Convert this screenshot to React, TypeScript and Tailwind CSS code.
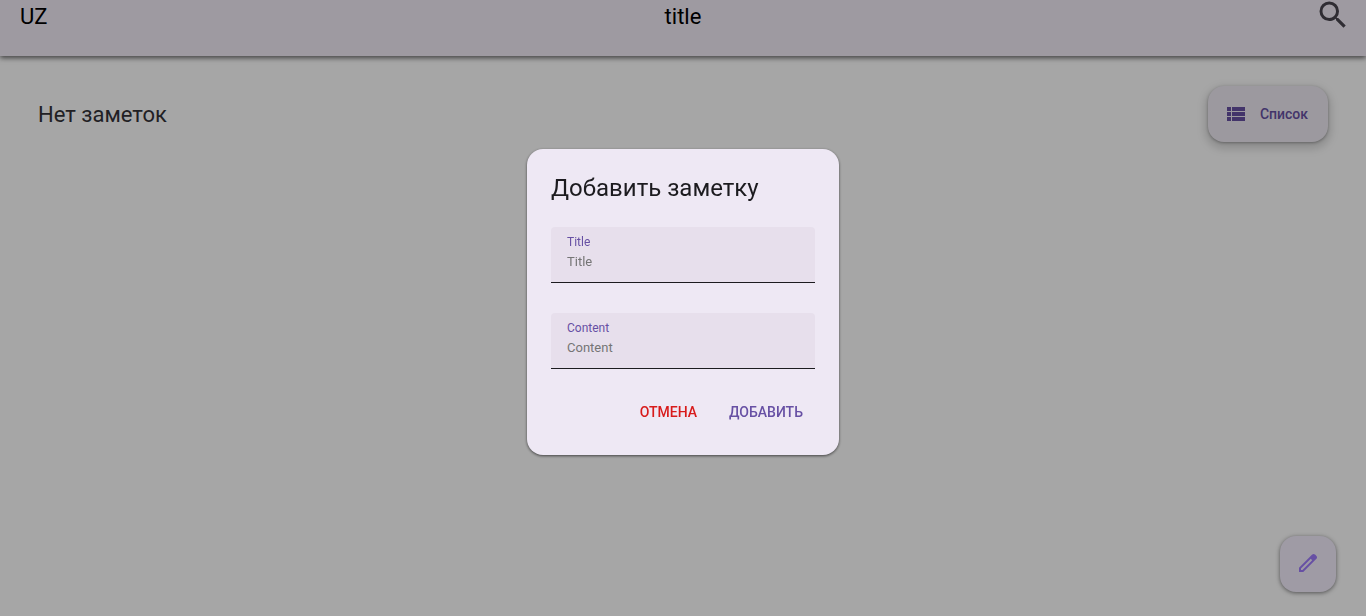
import React from "react";

function ListIcon() {
  return (
    <svg viewBox="0 0 24 24" className="size-6" fill="currentColor" aria-hidden="true">
      <path d="M3 14h4v-4H3v4zm0 5h4v-4H3v4zM3 9h4V5H3v4zm5 5h13v-4H8v4zm0 5h13v-4H8v4zM8 5v4h13V5H8z" />
    </svg>
  );
}

function SearchIcon() {
  return (
    <svg viewBox="0 0 24 24" className="size-9" fill="currentColor" aria-hidden="true">
      <path d="M15.5 14h-.79l-.28-.27A6.471 6.471 0 0 0 16 9.5 6.5 6.5 0 1 0 9.5 16c1.61 0 3.09-.59 4.23-1.57l.27.28v.79l5 4.99L20.49 19l-4.99-5zm-6 0C7.01 14 5 11.99 5 9.5S7.01 5 9.5 5 14 7.01 14 9.5 11.99 14 9.5 14z" />
    </svg>
  );
}

function PencilIcon() {
  return (
    <svg viewBox="0 -960 960 960" className="size-6" fill="currentColor" aria-hidden="true">
      <path d="M200-200h57l391-391-57-57-391 391v57Zm-80 80v-170l528-527q12-11 26.5-17t30.5-6q16 0 31 6t26 18l55 56q12 11 17.5 26t5.5 30q0 16-5.5 30.5T817-647L290-120H120Z" />
    </svg>
  );
}

function Field({ id, label }: { id: string; label: string }) {
  return (
    <div className="flex h-14 flex-col rounded-t border-b border-[#1c1b1f] bg-[#e7dfec] px-4 pt-2">
      <label htmlFor={id} className="text-xs leading-[14px] text-[#6750a4]">
        {label}
      </label>
      <input
        id={id}
        type="text"
        placeholder={label}
        className="mt-1 h-[18px] w-full bg-transparent text-[13px] text-[#1c1b1f] outline-none placeholder:text-[#757575]"
      />
    </div>
  );
}

export default function App() {
  return (
    <div className="flex min-h-screen flex-col bg-white font-[Roboto,sans-serif] text-[#1c1b1f]">
      <header className="grid h-14 grid-cols-3 items-start bg-[#f3edf7] px-5 text-[22px] shadow-[0_2px_5px_rgba(0,0,0,0.6)]">
        <a href="#" className="justify-self-start leading-[34px] text-black">UZ</a>
        <h1 className="justify-self-center leading-[34px] text-black">title</h1>
        <button type="button" aria-label="Поиск" className="-mr-[5px] -mt-[3px] justify-self-end text-[#49454f]">
          <SearchIcon />
        </button>
      </header>
      <main className="flex grow flex-col justify-between pb-6 pl-[38px] pr-[30px] pt-[30px]">
        <div className="flex items-center justify-between pr-2">
          <p className="pt-0.5 text-[22px] leading-7 text-[#333238]">Нет заметок</p>
          <button
            type="button"
            className="flex h-14 items-center gap-3 rounded-2xl bg-[#f0ecf4] pl-4 pr-5 text-sm font-medium text-[#6750a4] shadow-[0_1px_3px_rgba(0,0,0,0.3),0_4px_8px_3px_rgba(0,0,0,0.15)]"
          >
            <ListIcon />
            Список
          </button>
        </div>
        <button
          type="button"
          aria-label="Новая заметка"
          className="z-20 flex size-14 items-center justify-center self-end rounded-2xl bg-[#9f9ba5] pb-0.5 text-[#6750a4] shadow-[0_1px_4px_rgba(0,0,0,0.5)]"
        >
          <PencilIcon />
        </button>
      </main>
      <div className="fixed inset-0 z-10 flex items-center justify-center bg-black/35 pb-3">
        <div
          role="dialog"
          aria-modal="true"
          aria-labelledby="dialog-title"
          className="flex w-[312px] flex-col rounded-2xl bg-[#eee8f4] p-6 shadow-[0_1px_3px_rgba(0,0,0,0.6)]"
        >
          <h2 id="dialog-title" className="text-2xl leading-[30px]">Добавить заметку</h2>
          <form className="flex flex-col pt-6" onSubmit={(e) => e.preventDefault()}>
            <div className="flex flex-col gap-[30px]">
              <Field id="note-title" label="Title" />
              <Field id="note-content" label="Content" />
            </div>
            <div className="flex justify-end gap-2 pt-6 text-sm font-medium">
              <button type="button" className="h-[38px] px-3 text-[#d81b1b]">ОТМЕНА</button>
              <button type="submit" className="h-[38px] px-3 text-[#6750a4]">ДОБАВИТЬ</button>
            </div>
          </form>
        </div>
      </div>
    </div>
  );
}
